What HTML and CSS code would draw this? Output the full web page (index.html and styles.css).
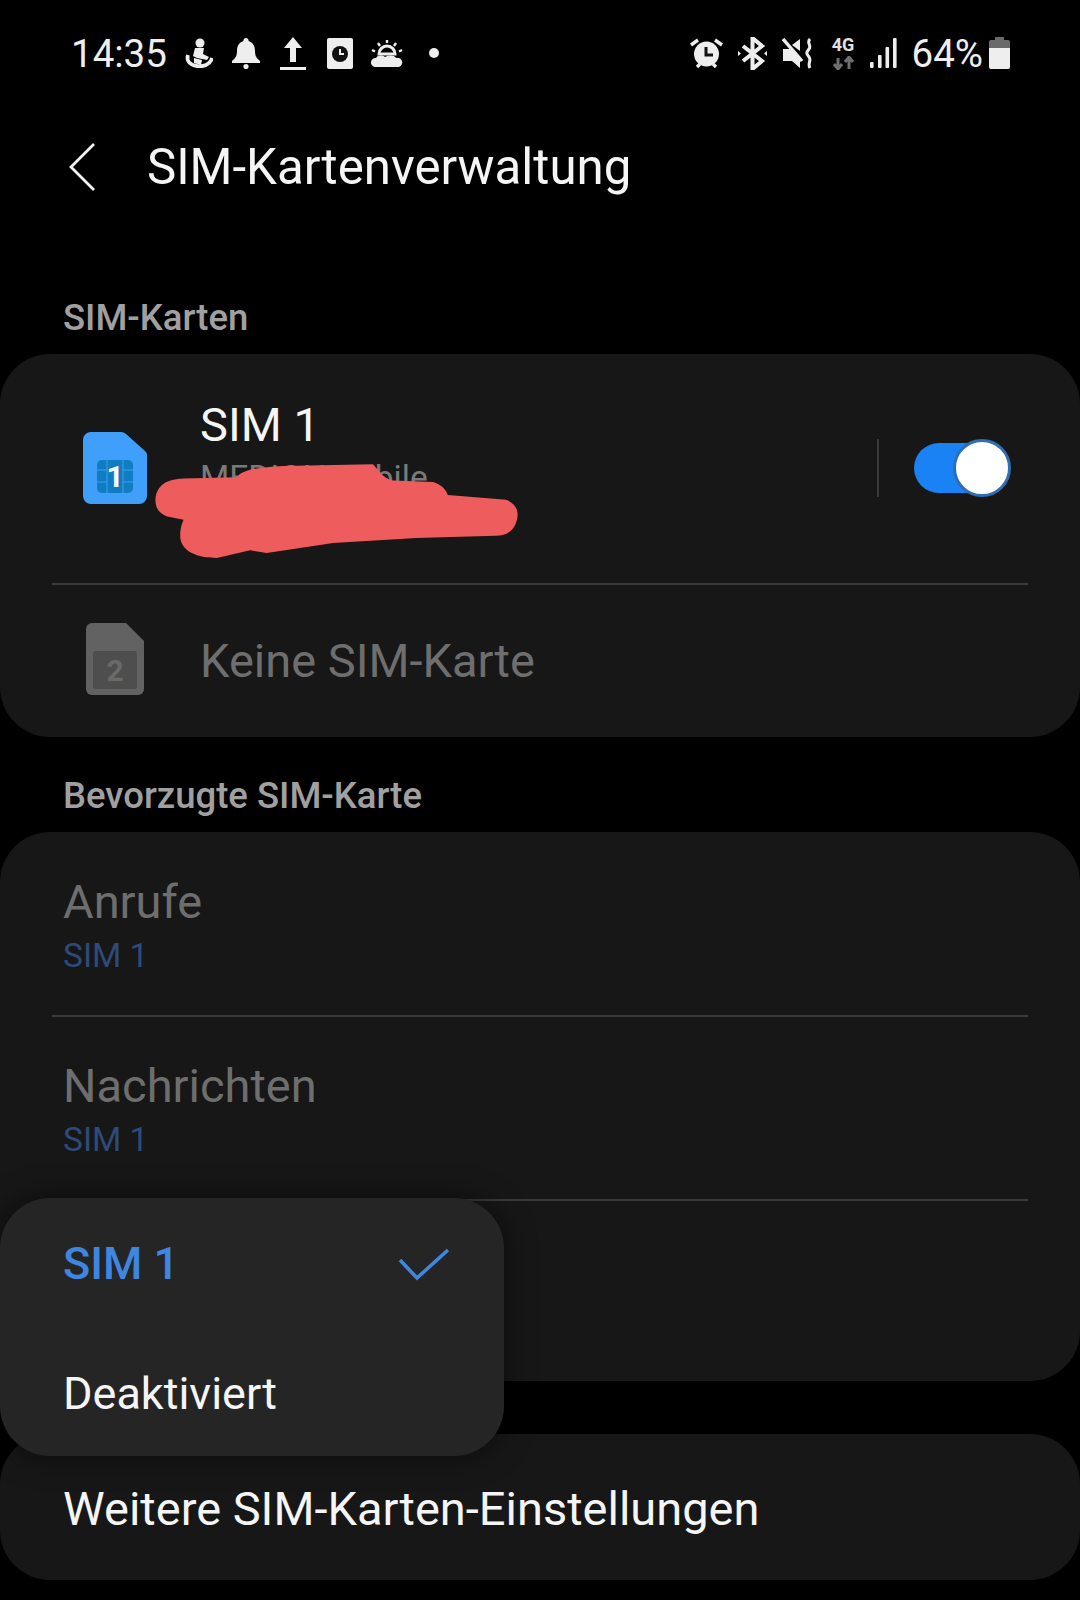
FILE: index.html
```html
<!DOCTYPE html>
<html lang="de">
<head>
    <title>SIM-Kartenverwaltung</title>
    <link rel="stylesheet" href="styles.css">
</head>
<body>
    <div class="screen">
        <!-- Status bar -->
        <div class="status-bar">
            <div class="status-left">
                <span class="clock">14:35</span>
                <span class="slot">
                    <svg width="28" height="30" viewBox="0 0 28 30"><circle cx="15" cy="5" r="4.5" fill="#eee"/><path d="M10 10h9l-1 6 6 3-2 3-10-2-4-2z" fill="#eee"/><path d="M3 17c-2 6 2 10 9 11 6 1 13-1 15-8" fill="none" stroke="#eee" stroke-width="3.8"/><path d="M9 20l8 2-1 5-7-2z" fill="#eee"/></svg>
                </span>
                <span class="slot">
                    <svg width="28" height="31" viewBox="0 0 28 31"><path d="M14 0a2.6 2.6 0 0 1 2.6 3C21 4.4 23 8 23 13c0 4 1 7 5 10v2H0v-2c4-3 5-6 5-10 0-5 2-8.600 6.400-10A2.600 2.600 0 0 1 14 0z" fill="#eee"/><circle cx="14" cy="28.500" r="2.600" fill="#eee"/></svg>
                </span>
                <span class="slot">
                    <svg width="26" height="33" viewBox="0 0 26 33"><path d="M13 0l9 11h-6v14h-6V11H4z" fill="#eee"/><rect y="30" width="26" height="3" fill="#eee"/></svg>
                </span>
                <span class="slot">
                    <svg width="26" height="31" viewBox="0 0 26 31"><rect width="26" height="31" rx="2" fill="#eee"/><circle cx="13" cy="16" r="8" fill="#111"/><path d="M13 11v5h4" fill="none" stroke="#eee" stroke-width="2"/></svg>
                </span>
                <span class="slot">
                    <svg width="32" height="27" viewBox="0 0 32 27"><path d="M8 14a8 8 0 0 1 16 0z" fill="none" stroke="#eee" stroke-width="3"/><path d="M16 0v3M7 3l2 3M25 3l-2 3M1 10l3 1.500M31 10l-3 1.500" stroke="#eee" stroke-width="2.400"/><path d="M4 27a4.500 4.500 0 0 1 1-9c2-3 6-3 9-1 4-2 9-2 11 1a4.500 4.500 0 0 1 3 9z" fill="#eee"/></svg>
                </span>
                <span class="slot">
                    <span class="dot"></span>
                </span>
            </div>
            <div class="status-right">
                <svg width="33" height="31" viewBox="0 0 33 31"><circle cx="16.500" cy="16" r="12.500" fill="#eee"/><path d="M16 9v8h7" fill="none" stroke="#111" stroke-width="3"/><path d="M1 7l7-5M32 7l-7-5M7 29l3-3M26 29l-3-3" stroke="#eee" stroke-width="3.400"/></svg>
                <svg width="29" height="33" viewBox="0 0 29 33"><path d="M5 9l19 15-9.500 8V1L24 9 5 24" fill="none" stroke="#eee" stroke-width="4"/><path d="M0 14l3 2.500L0 19zM29 14l-3 2.500 3 2.500z" fill="#eee"/></svg>
                <svg class="mute-icon" width="31" height="31" viewBox="0 0 31 31"><path d="M1 11h7l10 10v9l-8-7H1z" fill="#eee"/><path d="M1 1l19 22" stroke="#eee" stroke-width="3.400"/><path d="M10 7l8-6v12z" fill="#eee"/><path d="M28 1c-4 4 2 6-1 10s-3 4 0 8-2 6 1 11" fill="none" stroke="#eee" stroke-width="3"/></svg>
                <div class="net-icon">
                    <span class="net-label">4G</span>
                    <svg width="23" height="14" viewBox="0 0 23 14"><path d="M6 13V2M2 8l4 5 4-5M17 1v12M13 6l4-5 4 5" fill="none" stroke="#6f6f6f" stroke-width="3"/></svg>
                </div>
                <svg width="27" height="30" viewBox="0 0 27 30"><rect y="24" width="3.600" height="6" rx="1" fill="#eee"/><rect x="8" y="17" width="3.600" height="13" rx="1" fill="#eee"/><rect x="15.500" y="9" width="3.600" height="21" rx="1" fill="#eee"/><rect x="23" y="0" width="3.600" height="30" rx="1" fill="#eee"/></svg>
                <span class="battery-text">64%</span>
                <svg class="battery" width="21" height="32" viewBox="0 0 21 32"><path d="M6 0h9v3h4a2 2 0 0 1 2 2v8H0V5a2 2 0 0 1 2-2h4z" fill="#6a6a6a"/><path d="M0 11h21v19a2 2 0 0 1-2 2H2a2 2 0 0 1-2-2z" fill="#eee"/></svg>
            </div>
        </div>

        <!-- Title -->
        <div class="toolbar">
            <svg class="back" width="28" height="50" viewBox="0 0 28 50"><path d="M26 2L3 25l23 23" fill="none" stroke="#f2f2f2" stroke-width="2.800"/></svg>
            <h1 class="title">SIM-Kartenverwaltung</h1>
        </div>

        <div class="section-label first-label">SIM-Karten</div>
        <div class="card sim-card">
            <div class="sim-row sim-row-active">
                <div class="sim-icon-box">
                    <svg width="64" height="72" viewBox="0 0 64 72"><path d="M8 0h30a8 8 0 0 1 5 2l19 17a6 6 0 0 1 2 5v40a8 8 0 0 1-8 8H8a8 8 0 0 1-8-8V8a8 8 0 0 1 8-8z" fill="#3f9ffa"/><rect x="14" y="28" width="36" height="33" rx="5" fill="#0f7dc0"/><path d="M14 38h10M14 50h10M40 38h10M40 50h10M24 28v33M40 28v33" stroke="#3f9ffa" stroke-width="1"/><text x="32" y="55" class="sim-digit">1</text></svg>
                </div>
                <div class="sim-text">
                    <div class="row-title">SIM 1</div>
                    <div class="sim-provider">MEDIONmobile</div>
                </div>
                <div class="toggle-divider"></div>
                <div class="toggle"><div class="toggle-knob"></div></div>
            </div>
            <div class="divider"></div>
            <div class="sim-row sim-row-empty">
                <div class="sim-icon-box">
                    <svg width="58" height="72" viewBox="0 0 58 72"><path d="M6 0h34l18 18v48a6 6 0 0 1-6 6H6a6 6 0 0 1-6-6V6a6 6 0 0 1 6-6z" fill="#626262"/><rect x="7" y="28" width="44" height="38" rx="3" fill="#4e4e4e"/><text x="29" y="58" class="sim-digit sim-digit-off">2</text></svg>
                </div>
                <div class="row-title row-off">Keine SIM-Karte</div>
            </div>
            <!-- Scribble over the provider name -->
            <svg class="scribble" width="373" height="103" viewBox="300 240 1120 310"><path d="M315 360C318 315 350 298 400 296L560 292C575 270 620 262 700 258L970 253C990 275 1000 295 1030 302L1150 306C1175 312 1190 330 1195 345L1370 360C1400 370 1410 395 1403 420C1395 455 1370 468 1340 468L1100 475L850 490L650 520L600 512L500 535C440 535 395 515 390 475C388 450 395 430 400 420L350 410C325 400 315 385 315 360Z" fill="#ee5c5e"/></svg>
        </div>

        <div class="section-label">Bevorzugte SIM-Karte</div>
        <div class="card">
            <div class="pref-row">
                <div class="row-title row-off">Anrufe</div>
                <div class="row-sub">SIM 1</div>
            </div>
            <div class="divider"></div>
            <div class="pref-row">
                <div class="row-title row-off">Nachrichten</div>
                <div class="row-sub">SIM 1</div>
            </div>
            <div class="divider"></div>
            <div class="pref-row"></div>
        </div>

        <div class="card more-card">
            <div class="row-title">Weitere SIM-Karten-Einstellungen</div>
        </div>

        <!-- Dropdown menu over the list -->
        <div class="popup">
            <div class="popup-item popup-selected">
                <span>SIM 1</span>
                <svg width="52" height="34" viewBox="0 0 52 34"><path d="M2 13l17 18L50 3" fill="none" stroke="#3f86e0" stroke-width="3.600"/></svg>
            </div>
            <div class="popup-item">Deaktiviert</div>
        </div>
    </div>
</body>
</html>
```

FILE: styles.css
```css
/* Base styles */
body {
    margin: 0;
    background: #000;
    color: #f5f5f5;
    font-family: Roboto, "Liberation Sans", sans-serif;
}

.screen {
    position: relative;
    width: 1080px;
    height: 1600px;
    overflow: hidden;
    background: #000;
}

/* Status bar */
.status-bar {
    height: 106px;
    display: flex;
    justify-content: space-between;
    align-items: center;
    padding: 0 70px 0 71px;
}

.status-left,
.status-right {
    display: flex;
    align-items: center;
}

.status-right {
    gap: 15px;
}

.mute-icon {
    margin-right: 4px;
}

.clock {
    width: 104px;
    font-size: 38.5px;
    color: #eee;
}

.slot {
    width: 47px;
    display: flex;
    justify-content: center;
}

.dot {
    width: 10px;
    height: 10px;
    border-radius: 50%;
    background: #eee;
}

.net-icon {
    width: 23px;
    display: flex;
    flex-direction: column;
    align-items: center;
    gap: 2px;
}

.net-label {
    font-size: 18px;
    line-height: 18px;
    font-weight: 700;
    color: #e0e0e0;
}

.battery-text {
    font-size: 38.5px;
    color: #eee;
}

.battery {
    margin-left: -9px;
}

/* Title bar */
.toolbar {
    height: 122px;
    display: flex;
    align-items: center;
    padding-left: 68px;
}

.back {
    margin-right: 51px;
}

.title {
    margin: 0;
    font-size: 49.2px;
    font-weight: 400;
    color: #f5f5f5;
}

/* Section labels */
.section-label {
    height: 36px;
    line-height: 36px;
    margin: 41px 0 18px 63px;
    font-size: 36.5px;
    font-weight: 500;
    color: #a0a0a0;
}

.first-label {
    margin-top: 72px;
}

/* Cards */
.card {
    background: #171717;
    border-radius: 50px;
}

.sim-card {
    position: relative;
}

.divider {
    height: 2px;
    margin: 0 52px;
    background: #3a3a3a;
}

.sim-row {
    display: flex;
    align-items: center;
    box-sizing: border-box;
}

.sim-row-active {
    height: 229px;
    padding-bottom: 2px;
}

.sim-row-empty {
    height: 152px;
}

.sim-row-empty svg {
    margin-top: -4px;
}

.sim-icon-box {
    width: 64px;
    margin: 0 53px 0 83px;
    display: flex;
    justify-content: center;
}

.sim-digit {
    font-size: 30px;
    font-weight: 700;
    fill: #fff;
    text-anchor: middle;
}

.sim-digit-off {
    fill: #6a6a6a;
}

.sim-text {
    flex: 1;
    align-self: flex-start;
    padding-top: 44px;
}

.row-title {
    font-size: 47px;
    line-height: 54px;
    color: #f5f5f5;
}

.row-off {
    color: #6e6e6e;
}

.sim-provider {
    margin-top: 6px;
    font-size: 33.5px;
    line-height: 40px;
    color: #7a7a7a;
}

.scribble {
    position: absolute;
    left: 150px;
    top: 106px;
}

/* Toggle */
.toggle-divider {
    width: 2px;
    height: 58px;
    background: #3a3a3a;
}

.toggle {
    position: relative;
    width: 94px;
    height: 50px;
    margin: 0 72px 0 35px;
    border-radius: 25px;
    background: #1a82f5;
}

.toggle-knob {
    position: absolute;
    right: -3px;
    top: -4px;
    width: 52px;
    height: 52px;
    border: 3px solid #2f6eb0;
    border-radius: 50%;
    background: #fff;
}

/* Preferred SIM rows */
.pref-row {
    height: 182px;
    box-sizing: border-box;
    display: flex;
    flex-direction: column;
    justify-content: center;
    padding: 4px 0 0 63px;
}

.pref-row:first-child {
    height: 183px;
}

.pref-row:last-child {
    height: 180px;
}

.row-sub {
    margin-top: 6px;
    font-size: 33.5px;
    line-height: 42px;
    color: #2e4a78;
}

.more-card {
    height: 146px;
    box-sizing: border-box;
    margin-top: 53px;
    display: flex;
    align-items: center;
    padding: 4px 0 0 63px;
}

/* Dropdown menu */
.popup {
    position: absolute;
    left: 0;
    top: 1198px;
    width: 504px;
    height: 258px;
    box-sizing: border-box;
    padding-top: 3px;
    border-radius: 50px;
    background: #252525;
    box-shadow: 0 0 30px rgba(0, 0, 0, 0.55);
    display: flex;
    flex-direction: column;
    justify-content: center;
    gap: 68px;
}

.popup-item {
    height: 62px;
    display: flex;
    align-items: center;
    justify-content: space-between;
    padding: 0 54px 0 63px;
    font-size: 45px;
    color: #f5f5f5;
}

.popup-selected {
    font-weight: 500;
    color: #3f86e0;
}
```
